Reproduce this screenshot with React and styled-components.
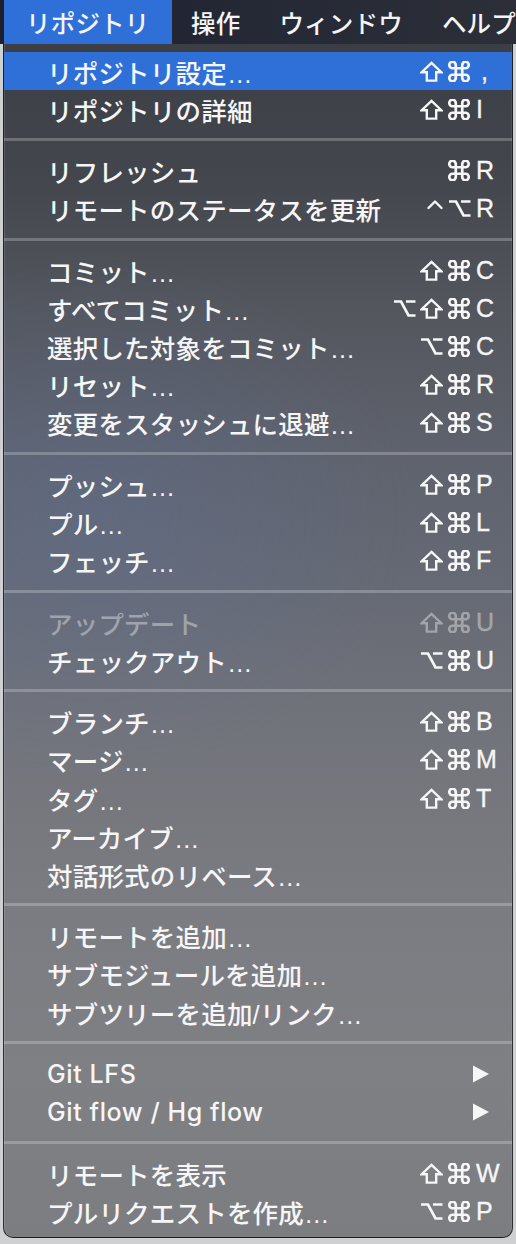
import React from 'react';
import styled, { createGlobalStyle } from 'styled-components';

const GlobalStyle = createGlobalStyle`
    html, body {
        margin: 0;
        padding: 0;
        background: #cfd0d2;
    }
    body {
        font-family: "Liberation Sans", "Noto Sans CJK JP", sans-serif;
        -webkit-font-smoothing: antialiased;
    }
`;

const Screen = styled.div`
    width: 516px;
    height: 1244px;
    overflow: hidden;
    display: flex;
    flex-direction: column;
`;

const MenuBar = styled.div`
    height: 44px;
    flex-shrink: 0;
    display: flex;
    padding-left: 4px;
    background: linear-gradient(90deg, #1b1f2e 0%, #252936 50%, #2c2f37 100%);
    overflow: hidden;
    white-space: nowrap;
`;

const MenuTitle = styled.div`
    display: flex;
    align-items: center;
    flex-shrink: 0;
    padding: 0 ${props => props.$pad || 19.5}px;
    font-size: 24.5px;
    font-weight: 500;
    letter-spacing: 0.2px;
    color: #f4f5f7;
    background: ${props => props.$active ? '#2f6fd8' : 'transparent'};
`;

const Panel = styled.div`
    margin-left: 3px;
    width: 510px;
    box-sizing: border-box;
    padding: 8px 0 7px;
    border: 1px solid rgba(20, 20, 24, 0.75);
    border-top: none;
    border-radius: 0 0 10px 10px;
    box-shadow: inset 1px 0 0 rgba(255, 255, 255, 0.12), inset -1px 0 0 rgba(255, 255, 255, 0.08);
    background:
        radial-gradient(ellipse 320px 260px at 90px 470px, rgba(95, 115, 165, 0.28), rgba(95, 115, 165, 0)),
        linear-gradient(180deg, #3b3e44 0%, #44474d 12%, #53565d 22%, #5e626c 34%, #666a74 46%, #72747b 58%, #7b7c81 72%, #7f8084 86%, #7c7d81 100%);
`;

const Row = styled.div`
    height: 38.1px;
    display: flex;
    align-items: center;
    padding: 0 ${props => props.$sub ? 22 : 17}px 0 43px;
    background: ${props => props.$selected ? '#2f6fd8' : 'transparent'};
    color: ${props => props.$disabled ? 'rgba(255, 255, 255, 0.38)' : '#f6f6f7'};
`;

const Label = styled.span`
    flex: 1;
    font-family: ${props => props.$latin ? 'Inter, "Liberation Sans", sans-serif' : 'inherit'};
    font-size: ${props => props.$latin ? '25px' : '25.5px'};
    font-weight: 500;
    letter-spacing: ${props => props.$latin ? '0.6px' : '0.2px'};
    white-space: nowrap;
`;

const Keys = styled.span`
    display: flex;
    align-items: center;
    gap: 4px;
`;

const KeyLetter = styled.span`
    width: 19px;
    font-size: 25px;
    line-height: 1;
    margin-left: 1px;
    padding-left: ${props => props.$punct ? 5 : 0}px;
    box-sizing: border-box;
    white-space: nowrap;
    -webkit-text-stroke: 0.35px currentColor;
`;

const Separator = styled.div`
    height: 3px;
    margin: 10px 0 10.5px;
    background: rgba(255, 255, 255, 0.23);
`;

const Glyph = styled.svg`
    display: block;
    flex-shrink: 0;
    fill: none;
    stroke: currentColor;
    stroke-linecap: round;
    stroke-linejoin: round;
`;

function KeyGlyph({ k }) {
    if (k === 'shift') {
        return (
            <Glyph width="23" height="21" viewBox="0 0 23 21" strokeWidth="2.4" style={{ strokeLinejoin: 'miter' }}>
                <polygon points="11.5,1.8 21.3,11.2 16.2,11.2 16.2,19.6 6.8,19.6 6.8,11.2 1.7,11.2" />
            </Glyph>
        );
    }
    if (k === 'cmd') {
        return (
            <Glyph width="24" height="21" viewBox="2.3 2.3 19.4 19.4" strokeWidth="2.5">
                <path d="M15 6v12a3 3 0 1 0 3-3H6a3 3 0 1 0 3 3V6a3 3 0 1 0-3 3h12a3 3 0 1 0-3-3" />
            </Glyph>
        );
    }
    if (k === 'opt') {
        return (
            <Glyph width="23" height="21" viewBox="0 0 23 21" strokeWidth="2.7" style={{ strokeLinecap: 'butt', strokeLinejoin: 'miter' }}>
                <path d="M1 3.5H8L15.5 17.5H22.5M13 3.5H22.5" />
            </Glyph>
        );
    }
    if (k === 'ctrl') {
        return (
            <Glyph width="18" height="21" viewBox="0 0 18 21" strokeWidth="2.4">
                <path d="M2.5 10L9 3.5L15.5 10" />
            </Glyph>
        );
    }
    return <KeyLetter $punct={k === ','}>{k}</KeyLetter>;
}

const Arrow = () => (
    <svg width="18" height="18" viewBox="0 0 18 18">
        <polygon points="1,0.5 17,9 1,17.5" fill="#f6f6f7" />
    </svg>
);

const sections = [
    [
        { label: 'リポジトリ設定…', keys: ['shift', 'cmd', ','], selected: true },
        { label: 'リポジトリの詳細', keys: ['shift', 'cmd', 'I'] },
    ],
    [
        { label: 'リフレッシュ', keys: ['cmd', 'R'] },
        { label: 'リモートのステータスを更新', keys: ['ctrl', 'opt', 'R'] },
    ],
    [
        { label: 'コミット…', keys: ['shift', 'cmd', 'C'] },
        { label: 'すべてコミット…', keys: ['opt', 'shift', 'cmd', 'C'] },
        { label: '選択した対象をコミット…', keys: ['opt', 'cmd', 'C'] },
        { label: 'リセット…', keys: ['shift', 'cmd', 'R'] },
        { label: '変更をスタッシュに退避…', keys: ['shift', 'cmd', 'S'] },
    ],
    [
        { label: 'プッシュ…', keys: ['shift', 'cmd', 'P'] },
        { label: 'プル…', keys: ['shift', 'cmd', 'L'] },
        { label: 'フェッチ…', keys: ['shift', 'cmd', 'F'] },
    ],
    [
        { label: 'アップデート', keys: ['shift', 'cmd', 'U'], disabled: true },
        { label: 'チェックアウト…', keys: ['opt', 'cmd', 'U'] },
    ],
    [
        { label: 'ブランチ…', keys: ['shift', 'cmd', 'B'] },
        { label: 'マージ…', keys: ['shift', 'cmd', 'M'] },
        { label: 'タグ…', keys: ['shift', 'cmd', 'T'] },
        { label: 'アーカイブ…' },
        { label: '対話形式のリベース…' },
    ],
    [
        { label: 'リモートを追加…' },
        { label: 'サブモジュールを追加…' },
        { label: 'サブツリーを追加/リンク…' },
    ],
    [
        { label: 'Git LFS', sub: true, latin: true },
        { label: 'Git flow / Hg flow', sub: true, latin: true },
    ],
    [
        { label: 'リモートを表示', keys: ['shift', 'cmd', 'W'] },
        { label: 'プルリクエストを作成…', keys: ['opt', 'cmd', 'P'] },
    ],
];

function MenuItem({ item }) {
    return (
        <Row $selected={item.selected} $disabled={item.disabled} $sub={item.sub}>
            <Label $latin={item.latin}>{item.label}</Label>
            {item.keys && (
                <Keys>
                    {item.keys.map((k, i) => <KeyGlyph key={i} k={k} />)}
                </Keys>
            )}
            {item.sub && <Arrow />}
        </Row>
    );
}

export default function App() {
    return (
        <Screen>
            <GlobalStyle />
            <MenuBar>
                <MenuTitle $active $pad={22}>リポジトリ</MenuTitle>
                <MenuTitle>操作</MenuTitle>
                <MenuTitle>ウィンドウ</MenuTitle>
                <MenuTitle>ヘルプ</MenuTitle>
            </MenuBar>
            <Panel>
                {sections.map((section, si) => (
                    <React.Fragment key={si}>
                        {si > 0 && <Separator />}
                        {section.map((item, ii) => <MenuItem key={ii} item={item} />)}
                    </React.Fragment>
                ))}
            </Panel>
        </Screen>
    );
}
